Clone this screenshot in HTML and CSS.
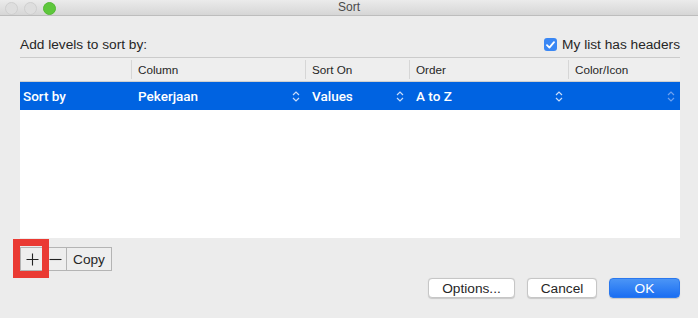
FILE: index.html
```html
<!DOCTYPE html>
<html lang="en">
<head>
  <meta charset="UTF-8" />
  <meta name="viewport" content="width=device-width, initial-scale=1.0" />
  <title>Sort</title>
  <link rel="stylesheet" href="styles.css">
</head>
<body>
  <div class="window">
    <div class="titlebar">
      <div class="lights">
        <span class="light"></span>
        <span class="light"></span>
        <span class="light light-green"></span>
      </div>
      <div class="title">Sort</div>
    </div>

    <div class="content">
      <div class="top-row">
        <span>Add levels to sort by:</span>
        <label class="check">
          <span class="box">
            <svg width="9" height="8" viewBox="0 0 9 8"><path d="M1 4.2 L3.4 6.6 L8 1.2" fill="none" stroke="#fff" stroke-width="1.8" stroke-linecap="round" stroke-linejoin="round"/></svg>
          </span>
          My list has headers
        </label>
      </div>

      <div class="table">
        <div class="thead">
          <div class="th"></div>
          <div class="th">Column</div>
          <div class="th">Sort On</div>
          <div class="th">Order</div>
          <div class="th">Color/Icon</div>
        </div>
        <div class="tr selected">
          <div class="td">Sort by</div>
          <div class="td">Pekerjaan <svg class="updown" width="8" height="11" viewBox="0 0 8 11"><path d="M1 4 L4 1 L7 4 M1 7 L4 10 L7 7" fill="none" stroke="currentColor" stroke-width="1.2"/></svg></div>
          <div class="td">Values <svg class="updown" width="8" height="11" viewBox="0 0 8 11"><path d="M1 4 L4 1 L7 4 M1 7 L4 10 L7 7" fill="none" stroke="currentColor" stroke-width="1.2"/></svg></div>
          <div class="td">A to Z <svg class="updown" width="8" height="11" viewBox="0 0 8 11"><path d="M1 4 L4 1 L7 4 M1 7 L4 10 L7 7" fill="none" stroke="currentColor" stroke-width="1.2"/></svg></div>
          <div class="td">&nbsp;<svg class="updown dim" width="8" height="11" viewBox="0 0 8 11"><path d="M1 4 L4 1 L7 4 M1 7 L4 10 L7 7" fill="none" stroke="currentColor" stroke-width="1.2"/></svg></div>
        </div>
        <div class="empty"></div>
      </div>

      <div class="toolbar">
        <button class="tool">
          <svg width="13" height="13" viewBox="0 0 13 13"><path d="M6.5 0.5 V12.5 M0.5 6.5 H12.5" stroke="#222" stroke-width="1.1"/></svg>
        </button>
        <button class="tool">
          <svg width="13" height="13" viewBox="0 0 13 13"><path d="M0.5 6.5 H12.5" stroke="#222" stroke-width="1.1"/></svg>
        </button>
        <button class="tool copy">Copy</button>
        <span class="highlight"></span>
      </div>

      <div class="actions">
        <button class="btn">Options...</button>
        <button class="btn">Cancel</button>
        <button class="btn btn-primary">OK</button>
      </div>
    </div>
  </div>
</body>
</html>
```

FILE: styles.css
```css
body {
  margin: 0;
  padding: 0;
  background: #ececec;
  font-family: "Helvetica Neue", "Liberation Sans", Arial, sans-serif;
  font-size: 13.7px;
  color: #262626;
}
.window {
  width: 698px;
  height: 318px;
  background: #ececec;
  overflow: hidden;
}
.titlebar {
  height: 15px;
  border-bottom: 1px solid #bdbdbd;
  background: linear-gradient(#ebebeb, #d6d6d6);
  position: relative;
  display: flex;
  align-items: center;
  justify-content: center;
}
.lights {
  position: absolute;
  left: 5px;
  top: 2px;
  display: flex;
  gap: 6px;
}
.light {
  width: 11px;
  height: 11px;
  border-radius: 50%;
  border: 1px solid #cfcfcf;
  background: #dedede;
}
.light-green {
  background: #5ec73c;
  border-color: #54b935;
}
.title {
  font-size: 12px;
  color: #4a4a4a;
  line-height: 15px;
}
.content {
  padding: 0 18px 0 20px;
}
.top-row {
  height: 41px;
  display: flex;
  justify-content: space-between;
  align-items: flex-end;
}
.top-row > span {
  margin-bottom: 5px;
}
.check {
  display: flex;
  align-items: center;
  gap: 5px;
  margin-bottom: 5px;
}
.box {
  width: 13px;
  height: 13px;
  border-radius: 3px;
  background: #3a87f4;
  display: flex;
  align-items: center;
  justify-content: center;
}
.table {
  width: 660px;
  border-top: 1px solid #cbcbcb;
}
.thead, .tr {
  display: grid;
  grid-template-columns: 111px 174px 104px 159px 112px;
}
.thead {
  height: 23px;
  background: #eeeeee;
  border-bottom: 1px solid #cfcfcf;
}
.th {
  font-size: 11.7px;
  line-height: 23px;
  padding-left: 6px;
  color: #262626;
}
.th + .th {
  border-left: 1px solid #d6d6d6;
  margin: 2px 0;
  line-height: 19px;
}
.tr {
  height: 28px;
}
.selected {
  background: #0063e1;
  color: #fff;
  font-family: Roboto, "Liberation Sans", sans-serif;
  font-weight: 500;
  font-size: 13.5px;
}
.td {
  display: flex;
  align-items: center;
  justify-content: space-between;
  padding: 0 5px 0 7px;
}
.td:first-child {
  padding-left: 3px;
}
.updown {
  color: #c9dcf8;
}
.updown.dim {
  color: #6ea1ee;
}
.empty {
  height: 128px;
  background: #fff;
}
.toolbar {
  position: relative;
  display: flex;
  margin-top: 9px;
}
.tool {
  box-sizing: border-box;
  height: 24px;
  width: 24px;
  padding: 0;
  border: 1px solid #b4b4b4;
  background: #eeeeee;
  font-family: inherit;
  font-size: 13.7px;
  color: #262626;
  margin-right: -1px;
  display: flex;
  align-items: center;
  justify-content: center;
}
.tool.copy {
  width: 46px;
}
.highlight {
  position: absolute;
  left: -7px;
  top: -8px;
  width: 22px;
  height: 25px;
  border: 7px solid #ea3a33;
}
.actions {
  display: flex;
  justify-content: flex-end;
  gap: 12px;
  margin-top: 7px;
}
.btn {
  height: 20px;
  padding: 0 12px;
  border: 1px solid #c6c6c6;
  border-radius: 4px;
  background: #fff;
  font-family: inherit;
  font-size: 13.7px;
  color: #262626;
  box-shadow: 0 0.5px 1px rgba(0, 0, 0, 0.15);
}
.btn:first-child {
  width: 87px;
}
.btn:nth-child(2) {
  width: 70px;
}
.btn-primary {
  width: 71px;
  border-color: #2a78ee;
  background: linear-gradient(#4b95f6, #1a6ef2);
  color: #fff;
}
```
